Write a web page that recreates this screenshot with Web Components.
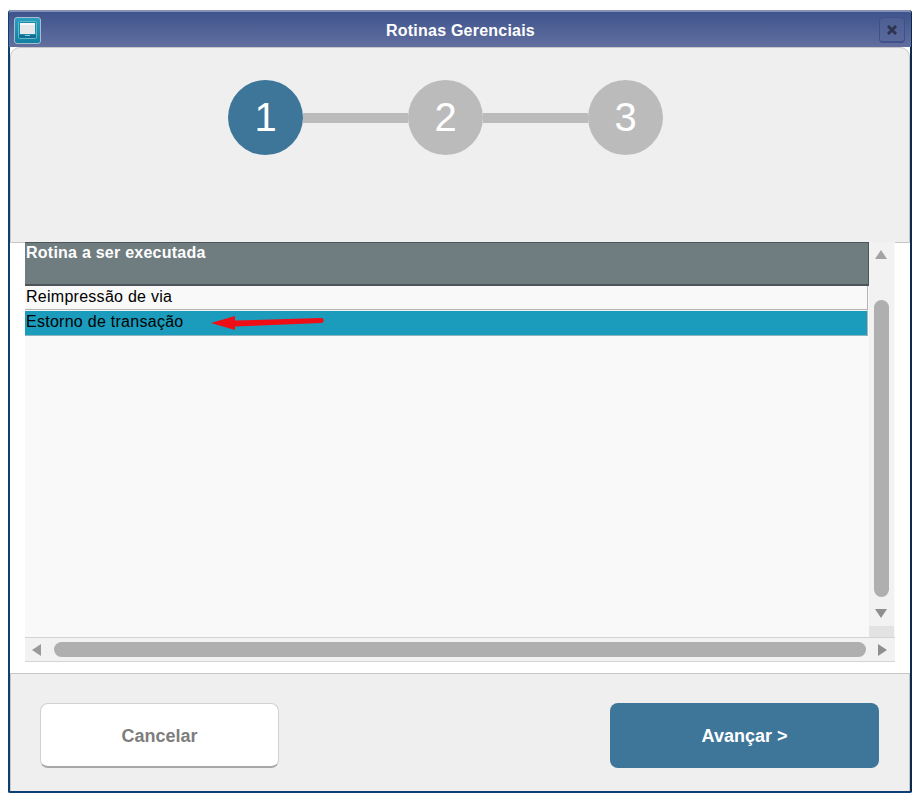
<!DOCTYPE html>
<html lang="pt">
<head>
<meta charset="utf-8">
<title>Rotinas Gerenciais</title>
<style>
  html, body { margin: 0; background: #fff; }
  body { font-family: "Liberation Sans", Arial, sans-serif; }
</style>
</head>
<body>
<app-window heading="Rotinas Gerenciais">
  <step-bar active="1" steps="3"></step-bar>
  <routine-grid heading="Rotina a ser executada">
    <grid-row>Reimpressão de via</grid-row>
    <grid-row selected>Estorno de transação</grid-row>
  </routine-grid>
  <app-button slot="footer">Cancelar</app-button>
  <app-button slot="footer" primary>Avançar &gt;</app-button>
</app-window>

<script>
class AppWindow extends HTMLElement {
  constructor() {
    super();
    this.attachShadow({ mode: "open" });
  }

  connectedCallback() {
    this.shadowRoot.innerHTML = /* html */ `
    <style>
      * { box-sizing: border-box; }
      :host {
        display: block;
        width: 904px;
        margin: 10px 0 0 8px;
        color: #000;
      }
      .window {
        display: flex;
        flex-direction: column;
        height: 783px;
        border-left: 2px solid #0d3f75;
        border-right: 2px solid #0a2a50;
        border-bottom: 2px solid #0d3f75;
        border-top: 0;
        border-radius: 3px 3px 2px 2px;
        background: #fff;
      }
      .title {
        flex: none;
        display: grid;
        grid-template-columns: 32px 1fr 32px;
        align-items: center;
        height: 37px;
        margin: 0 -1px 0 -1px;
        padding: 2px 6px 0 5px;
        border-top: 2px solid #8590b5;
        border-radius: 3px 3px 0 0;
        background: linear-gradient(#3e548c, #626f9f);
        color: #fff;
        font: bold 16px "Liberation Sans", Arial, sans-serif;
        letter-spacing: 0.22px;
        text-align: center;
      }
      .title span { padding-left: 2px; }
      .close {
        justify-self: end;
        width: 26px;
        height: 26px;
        margin-top: -1px;
        border: 1px solid #3f5188;
        border-bottom-width: 2px;
        border-radius: 4px;
        background: linear-gradient(#4c5e93, #5a699c);
        display: flex;
        align-items: center;
        justify-content: center;
      }
      .logo { display: block; }
      .top {
        flex: none;
        height: 196px;
        border: 1px solid #c6c6c6;
        border-radius: 10px 10px 0 0;
        background: #efefef;
      }
      .middle {
        flex: none;
        height: 431px;
        padding: 0 15px 12px 15px;
        margin-top: -1px;
      }
      .bottom {
        flex: 1;
        display: flex;
        justify-content: space-between;
        align-items: flex-start;
        padding: 29px 30px 0 29px;
        border-top: 1px solid #c6c6c6;
        border-left: 1px solid #c6c6c6;
        border-right: 1px solid #c6c6c6;
        background: #efefef;
      }
    </style>
    <div class="window">
      <div class="title">
        <svg class="logo" width="27" height="27" viewBox="0 0 27 27">
          <defs>
            <linearGradient id="tile" x1="0" y1="0" x2="0" y2="1">
              <stop offset="0" stop-color="#2a9fc0"/>
              <stop offset="1" stop-color="#127f9f"/>
            </linearGradient>
          </defs>
          <rect x="0.5" y="0.5" width="26" height="26" rx="2.5" fill="url(#tile)" stroke="#a7bdcd"/>
          <rect x="4.5" y="4.5" width="18" height="17" rx="1" fill="#1b8cab" stroke="#63b6cc"/>
          <rect x="6" y="6" width="15" height="11" fill="#e6e8ea"/>
          <rect x="6" y="6" width="15" height="2" fill="#f7f7f7"/>
          <path d="M5 18h17v3H5z" fill="#0f6f93"/>
          <path d="M11 18h5v1h-5z" fill="#8cc6d8"/>
        </svg>
        <span>${this.getAttribute("heading")}</span>
        <div class="close">
          <svg width="10" height="10" viewBox="0 0 10 10">
            <path d="M2 2l6 6M8 2l-6 6" stroke="#2f3550" stroke-width="3" stroke-linecap="square"/>
          </svg>
        </div>
      </div>
      <div class="top"><slot name="steps"></slot></div>
      <div class="middle"><slot></slot></div>
      <div class="bottom"><slot name="footer"></slot></div>
    </div>
    `;
    this.querySelector("step-bar").slot = "steps";
  }
}

class StepBar extends HTMLElement {
  constructor() {
    super();
    this.attachShadow({ mode: "open" });
  }

  connectedCallback() {
    const steps = Number(this.getAttribute("steps"));
    const active = Number(this.getAttribute("active"));
    let items = "";
    for (let n = 1; n <= steps; n++) {
      if (n > 1) items += `<div class="line"></div>`;
      items += `<div class="step ${n === active ? "step--active" : ""}">${n}</div>`;
    }
    this.shadowRoot.innerHTML = /* html */ `
    <style>
      :host {
        display: flex;
        align-items: center;
        padding: 32px 0 0 217px;
      }
      .step {
        flex: none;
        width: 75px;
        height: 75px;
        border-radius: 50%;
        background: #bbbbbb;
        color: #fff;
        font: 40px/75px "Liberation Sans", Arial, sans-serif;
        text-align: center;
      }
      .step--active { background: #3e7699; }
      .line {
        flex: none;
        width: 105px;
        height: 10px;
        background: #bbbbbb;
      }
    </style>
    ${items}
    `;
  }
}

class RoutineGrid extends HTMLElement {
  constructor() {
    super();
    this.attachShadow({ mode: "open" });
  }

  connectedCallback() {
    this.shadowRoot.innerHTML = /* html */ `
    <style>
      * { box-sizing: border-box; }
      :host {
        display: grid;
        grid-template-columns: 1fr 26px;
        grid-template-rows: 395px 25px;
        width: 870px;
        height: 420px;
        background: #f9f9f9;
        position: relative;
      }
      .list { overflow: hidden; }
      .header {
        height: 44px;
        padding: 0 0 0 1px;
        background: #707d80;
        border: 1px solid #4c5557;
        border-width: 1px 1px 2px 0;
        color: #fff;
        font: bold 16px/19px "Liberation Sans", Arial, sans-serif;
        letter-spacing: 0.24px;
      }
      ::slotted(grid-row) { margin-right: 1px; }
      .vbar {
        display: flex;
        flex-direction: column;
        align-items: center;
        margin-right: 1px;
        background: #f2f2f2;
      }
      .vbar .thumb {
        width: 15px;
        height: 297px;
        margin-top: 41px;
        border-radius: 8px;
        background: #afafaf;
      }
      .up { margin-top: 8px; }
      .down { margin-top: 12px; }
      .vbar svg { position: relative; left: -1px; }
      .vbar .fill {
        flex: 1;
        width: 100%;
        margin-top: 8px;
        background: #e3e3e3;
      }
      .hbar {
        grid-column: 1 / 3;
        display: flex;
        align-items: center;
        background: #f2f2f2;
        border-top: 1px solid #d4d4d4;
        border-bottom: 1px solid #d4d4d4;
      }
      .hbar .thumb {
        width: 812px;
        height: 15px;
        margin: 0 12px 0 13px;
        border-radius: 8px;
        background: #afafaf;
      }
      .left { margin-left: 7px; }
      .arrow {
        position: absolute;
        left: 186px;
        top: 71px;
      }
    </style>
    <div class="list">
      <div class="header">${this.getAttribute("heading")}</div>
      <slot></slot>
    </div>
    <div class="vbar">
      <svg class="up" width="12" height="9" viewBox="0 0 12 9"><path d="M6 0L12 9H0z" fill="#a3a3a3"/></svg>
      <div class="thumb"></div>
      <svg class="down" width="12" height="9" viewBox="0 0 12 9"><path d="M0 0h12L6 9z" fill="#8f8f8f"/></svg>
      <div class="fill"></div>
    </div>
    <div class="hbar">
      <svg class="left" width="9" height="12" viewBox="0 0 9 12"><path d="M9 0v12L0 6z" fill="#9a9a9a"/></svg>
      <div class="thumb"></div>
      <svg width="9" height="12" viewBox="0 0 9 12"><path d="M0 0l9 6L0 12z" fill="#8f8f8f"/></svg>
    </div>
    <svg class="arrow" width="116" height="20" viewBox="0 0 116 20">
      <path d="M0 10L24 3L24 7.5L110 5a2.5 2.5 0 0 1 0.5 5L24 13.5L24 17z" fill="#f00e16"/>
    </svg>
    `;
  }
}

class GridRow extends HTMLElement {
  constructor() {
    super();
    this.attachShadow({ mode: "open" });
  }

  connectedCallback() {
    this.shadowRoot.innerHTML = /* html */ `
    <style>
      :host {
        display: block;
        box-sizing: border-box;
        height: 24px;
        padding: 1px 0 0 1px;
        background: #f9f9f9;
        border-right: 1px solid #b4b4b4;
        border-bottom: 1px solid #b4b4b4;
        color: #000;
        font: 16px/19px "Liberation Sans", Arial, sans-serif;
        letter-spacing: 0.27px;
      }
      :host([selected]) {
        height: 26px;
        padding-top: 1px;
        background: #1b9cbd;
        background-clip: padding-box;
        border-top: 1px solid #f4f4f4;
        border-bottom-color: #8fb4bf;
      }
    </style>
    <slot></slot>
    `;
  }
}

class AppButton extends HTMLElement {
  constructor() {
    super();
    this.attachShadow({ mode: "open" });
  }

  connectedCallback() {
    this.shadowRoot.innerHTML = /* html */ `
    <style>
      :host {
        display: flex;
        align-items: center;
        justify-content: center;
        box-sizing: border-box;
        width: 239px;
        height: 65px;
        padding-top: 2px;
        border: 1px solid #d2d2d2;
        border-bottom: 2px solid #a8a8a8;
        border-radius: 8px;
        background: #fff;
        color: #7d7d7d;
        font: bold 18px "Liberation Sans", Arial, sans-serif;
      }
      :host([primary]) {
        width: 269px;
        padding-top: 2px;
        border: 0;
        background: #3e7699;
        color: #fff;
      }
    </style>
    <slot></slot>
    `;
  }
}

customElements.define("app-window", AppWindow);
customElements.define("step-bar", StepBar);
customElements.define("routine-grid", RoutineGrid);
customElements.define("grid-row", GridRow);
customElements.define("app-button", AppButton);
</script>
</body>
</html>
